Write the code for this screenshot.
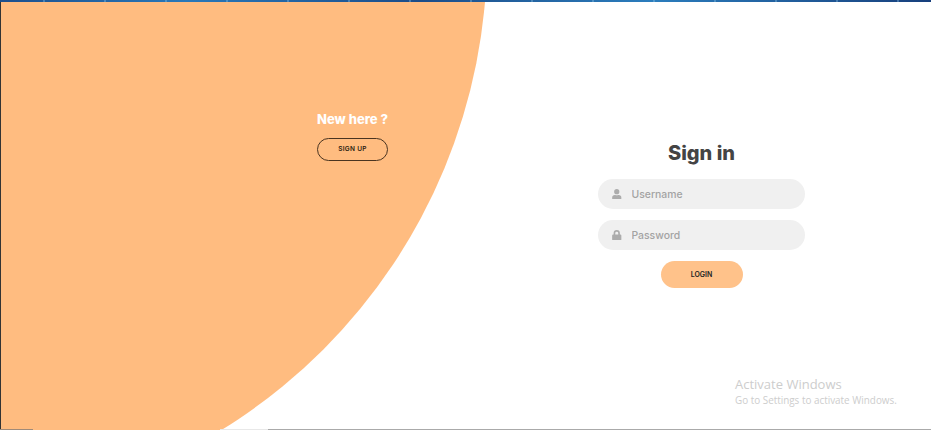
<div class="desktop">
    <div class="wallpaper"></div>
    <main class="page">
        <div class="circle"></div>
        <section class="panel left">
            <h3>New here ?</h3>
            <button class="outline">SIGN UP</button>
        </section>
        <section class="panel right">
            <form>
                <h2>Sign in</h2>
                <label class="field">
                    <svg viewBox="0 0 448 512" width="9.5" height="10.5"><path d="M224 256a128 128 0 1 0 0-256 128 128 0 0 0 0 256zm90 32h-17a174 174 0 0 1-146 0h-17A134 134 0 0 0 0 422v42a48 48 0 0 0 48 48h352a48 48 0 0 0 48-48v-42a134 134 0 0 0-134-134z" /></svg>
                    <input placeholder="Username" />
                </label>
                <label class="field">
                    <svg viewBox="0 0 448 512" width="9.5" height="10.5"><path d="M400 224h-24v-72a152 152 0 0 0-304 0v72H48a48 48 0 0 0-48 48v192a48 48 0 0 0 48 48h352a48 48 0 0 0 48-48V272a48 48 0 0 0-48-48zm-104 0H152v-72a72 72 0 0 1 144 0v72z" /></svg>
                    <input placeholder="Password" type="password" />
                </label>
                <button class="solid">LOGIN</button>
            </form>
        </section>
        <div class="watermark">
            <p class="big">Activate Windows</p>
            <p class="small">Go to Settings to activate Windows.</p>
        </div>
    </main>
    <div class="taskbar"></div>
</div>

<style>
    :global(body) {
        margin: 0;
        background: #fff;
    }
    .desktop {
        height: 430px;
        width: 931px;
        display: flex;
        flex-direction: column;
        overflow: hidden;
        font-family: Inter, "Liberation Sans", sans-serif;
    }
    .wallpaper {
        height: 2px;
        flex: none;
        background:
            repeating-linear-gradient(90deg, transparent 0 43px, rgba(150, 205, 235, 0.35) 43px 45px, transparent 45px 61px),
            linear-gradient(90deg, #1d4f8c, #2a78b8 20%, #1c4c88 45%, #2b7dbd 70%, #173f7c);
    }
    .page {
        flex: 1;
        position: relative;
        overflow: hidden;
        display: grid;
        grid-template-columns: 471px 459px;
        background: #fff;
        border-left: 1px solid #333;
    }
    .circle {
        position: absolute;
        width: 1117px;
        height: 1117px;
        left: -631.5px;
        top: -606.5px;
        border-radius: 50%;
        background: #ffbc80;
    }
    .panel {
        position: relative;
    }
    .left {
        display: flex;
        flex-direction: column;
        align-items: center;
        padding: 108px 0 0 232px;
    }
    h3 {
        margin: 0;
        font-size: 13px;
        line-height: 18px;
        font-weight: 800;
        color: #fff;
    }
    .outline {
        margin-top: 10px;
        width: 71px;
        height: 22.5px;
        border: 1px solid #4a3420;
        border-radius: 12px;
        background: transparent;
        color: #2a1c10;
        font: 600 6.5px Inter, sans-serif;
        letter-spacing: 0.3px;
        padding: 0;
    }
    .right {
        display: flex;
        justify-content: center;
    }
    form {
        margin-top: 138px;
        width: 207px;
        display: flex;
        flex-direction: column;
        align-items: center;
    }
    h2 {
        margin: 0 0 12px;
        font-size: 20px;
        line-height: 27px;
        font-weight: 800;
        color: #444;
    }
    .field {
        width: 100%;
        height: 30px;
        margin-bottom: 11px;
        border-radius: 15px;
        background: #f0f0f0;
        display: flex;
        align-items: center;
        gap: 10px;
        padding-left: 14px;
        box-sizing: border-box;
    }
    .field svg {
        fill: #acacac;
        flex: none;
    }
    input {
        border: 0;
        background: none;
        outline: 0;
        min-width: 0;
        flex: 1;
        padding: 0;
        font: 500 10.4px Inter, sans-serif;
    }
    input::placeholder {
        color: #a3a3a3;
        opacity: 1;
    }
    .solid {
        width: 82px;
        height: 27px;
        border: 0;
        border-radius: 14px;
        background: #ffc28a;
        color: #222;
        font: 600 7px Inter, sans-serif;
        padding: 0;
    }
    .watermark {
        position: absolute;
        left: 734px;
        top: 374px;
        color: #cdcdcd;
        font-family: "Open Sans", sans-serif;
    }
    .watermark p {
        margin: 0;
    }
    .watermark .big {
        font-size: 13px;
        line-height: 17px;
    }
    .watermark .small {
        font-size: 9.9px;
        line-height: 14px;
    }
    .taskbar {
        height: 1px;
        flex: none;
        background: linear-gradient(90deg, #a08a78 33px, #ffbc80 33px, #ffbc80 220px, #e8e8e8 220px, #e8e8e8 268px, #aaa 268px);
    }
</style>
